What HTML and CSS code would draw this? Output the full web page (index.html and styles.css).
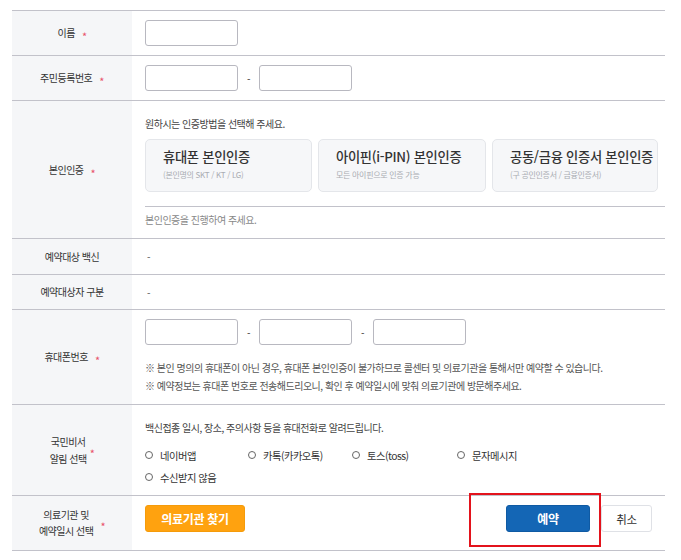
FILE: index.html
```html
<!DOCTYPE html>
<html lang="ko">
<head>
<meta charset="utf-8">
<title>예약 신청</title>
<link rel="stylesheet" href="styles.css">
</head>
<body>
<div class="page">
  <div class="form-table">
    <div class="row r-name">
      <div class="label">이름<span class="req">*</span></div>
      <div class="value"><input class="field" type="text"></div>
    </div>
    <div class="row r-rrn">
      <div class="label">주민등록번호<span class="req">*</span></div>
      <div class="value"><input class="field" type="text"><span class="dash">-</span><input class="field" type="text"></div>
    </div>
    <div class="row r-auth">
      <div class="label">본인인증<span class="req">*</span></div>
      <div class="value col">
        <p class="guide">원하시는 인증방법을 선택해 주세요.</p>
        <div class="cards">
          <div class="card"><div class="card-title">휴대폰 본인인증</div><div class="card-sub">(본인명의 SKT / KT / LG)</div></div>
          <div class="card"><div class="card-title">아이핀(i-PIN) 본인인증</div><div class="card-sub">모든 아이핀으로 인증 가능</div></div>
          <div class="card"><div class="card-title">공동/금융 인증서 본인인증</div><div class="card-sub">(구 공인인증서 / 금융인증서)</div></div>
        </div>
        <div class="sep"></div>
        <p class="status">본인인증을 진행하여 주세요.</p>
      </div>
    </div>
    <div class="row r-vac">
      <div class="label">예약대상 백신</div>
      <div class="value"><span class="plain">-</span></div>
    </div>
    <div class="row r-type">
      <div class="label">예약대상자 구분</div>
      <div class="value"><span class="plain">-</span></div>
    </div>
    <div class="row r-phone">
      <div class="label">휴대폰번호<span class="req">*</span></div>
      <div class="value col">
        <div class="inputs"><input class="field" type="text"><span class="dash">-</span><input class="field" type="text"><span class="dash">-</span><input class="field" type="text"></div>
        <p class="note">※ 본인 명의의 휴대폰이 아닌 경우, 휴대폰 본인인증이 불가하므로 콜센터 및 의료기관을 통해서만 예약할 수 있습니다.</p>
        <p class="note">※ 예약정보는 휴대폰 번호로 전송해드리오니, 확인 후 예약일시에 맞춰 의료기관에 방문해주세요.</p>
      </div>
    </div>
    <div class="row r-alarm">
      <div class="label two">국민비서<br>알림 선택<span class="req tight">*</span></div>
      <div class="value col">
        <p class="guide">백신접종 일시, 장소, 주의사항 등을 휴대전화로 알려드립니다.</p>
        <div class="radios">
          <label class="radio"><span class="circle"></span>네이버앱</label>
          <label class="radio"><span class="circle"></span>카톡(카카오톡)</label>
          <label class="radio"><span class="circle"></span>토스(toss)</label>
          <label class="radio"><span class="circle"></span>문자메시지</label>
          <label class="radio"><span class="circle"></span>수신받지 않음</label>
        </div>
      </div>
    </div>
    <div class="row r-hosp">
      <div class="label two">의료기관 및<br>예약일시 선택<span class="req">*</span></div>
      <div class="value split">
        <button class="btn btn-orange" type="button">의료기관 찾기</button>
        <div class="actions">
          <button class="btn btn-blue" type="button">예약</button>
          <button class="btn btn-white" type="button">취소</button>
        </div>
      </div>
    </div>
  </div>
  <div class="highlight"></div>
</div>
</body>
</html>
```

FILE: styles.css
```css
* { box-sizing: border-box; }
html, body { margin: 0; padding: 0; background: #fff; }
body {
  font-family: "Noto Sans CJK KR", "Noto Sans", sans-serif;
  font-size: 10px;
  letter-spacing: -0.5px;
  color: #333;
}
.page { position: relative; width: 681px; height: 560px; padding-top: 10px; }
.form-table {
  margin-left: 12px;
  width: 653px;
  border-top: 1px solid #c2c2ca;
}
.row { display: flex; border-bottom: 1px solid #c2c2ca; }
.label {
  width: 120px;
  flex: none;
  background: #f5f6f8;
  display: flex;
  align-items: center;
  justify-content: center;
  text-align: center;
  line-height: 14px;
}
.label.two { line-height: 17px; }
.r-hosp .label.two { line-height: 16px; }
.req {
  color: #e8516a;
  font-size: 11px;
  margin-left: 7px;
  position: relative;
  top: 3px;
}
.req.tight { margin-left: 3px; }
.value {
  flex: 1;
  display: flex;
  align-items: center;
  padding: 9px 13px;
}
.value.col { flex-direction: column; align-items: stretch; }
.field {
  width: 93px;
  height: 26px;
  border: 1px solid #b8b8c0;
  border-radius: 3px;
  background: #fff;
  margin: 0;
  padding: 0 6px;
  font: inherit;
}
.dash { width: 21px; text-align: center; color: #333; }
.inputs { display: flex; align-items: center; }
p { margin: 0; }
.guide { line-height: 14px; color: #444; }

.r-auth .value { padding: 16px 0 11px 13px; }
.cards {
  display: grid;
  grid-template-columns: 167px 168px 166px;
  gap: 6px;
  margin-top: 8px;
}
.card {
  height: 53px;
  border: 1px solid #e4e6ea;
  border-radius: 5px;
  background: #f6f7f9;
  padding: 8px 0 0 17px;
}
.card-title {
  font-size: 13.3px;
  font-weight: 500;
  letter-spacing: -0.3px;
  line-height: 18px;
  color: #333;
  white-space: nowrap;
}
.card-sub {
  margin-top: 3px;
  font-size: 8px;
  letter-spacing: -0.3px;
  line-height: 12px;
  color: #a9acb2;
  white-space: nowrap;
}
.sep { height: 1px; background: #c2c2ca; margin-top: 14px; }
.status { margin-top: 6px; line-height: 14px; color: #888; }

.r-vac .value { height: 35px; padding: 0 15px; }
.r-type .value { height: 34px; padding: 0 15px; }
.plain { color: #555; }

.r-phone .value { padding: 9px 13px 9px; }
.note { line-height: 18px; color: #555; white-space: nowrap; }
.r-phone .note:first-of-type { margin-top: 14px; }

.r-alarm .value { padding: 16px 13px 7px; }
.radios {
  display: grid;
  grid-template-columns: 103px 104px 105px 104px;
  margin-top: 9px;
}
.radio {
  display: flex;
  align-items: center;
  height: 22px;
  font-size: 10.3px;
  color: #333;
}
.circle {
  width: 8px;
  height: 8px;
  border: 1px solid #666;
  border-radius: 50%;
  margin-right: 7px;
  flex: none;
}

.r-hosp .value { padding: 9px 13px 18px; align-items: flex-start; }
.value.split { justify-content: space-between; }
.actions { display: flex; gap: 11px; }
.btn {
  height: 27px;
  border-radius: 3px;
  font-family: inherit;
  font-size: 11.5px;
  letter-spacing: -0.3px;
  cursor: pointer;
  padding: 0;
}
.btn-orange {
  width: 100px;
  background: #ffa20f;
  border: 1px solid #f59b0a;
  color: #fff;
  font-size: 12px;
  font-weight: 700;
}
.btn-blue {
  width: 84px;
  background: #1466b5;
  border: 1px solid #0f5aa3;
  color: #fff;
  font-size: 12px;
  font-weight: 700;
}
.btn-white {
  width: 51px;
  background: #fff;
  border: 1px solid #dfe1e6;
  color: #333;
}
.highlight {
  position: absolute;
  left: 469px;
  top: 493px;
  width: 132px;
  height: 54px;
  border: 2px solid #e3131c;
  pointer-events: none;
}
```
